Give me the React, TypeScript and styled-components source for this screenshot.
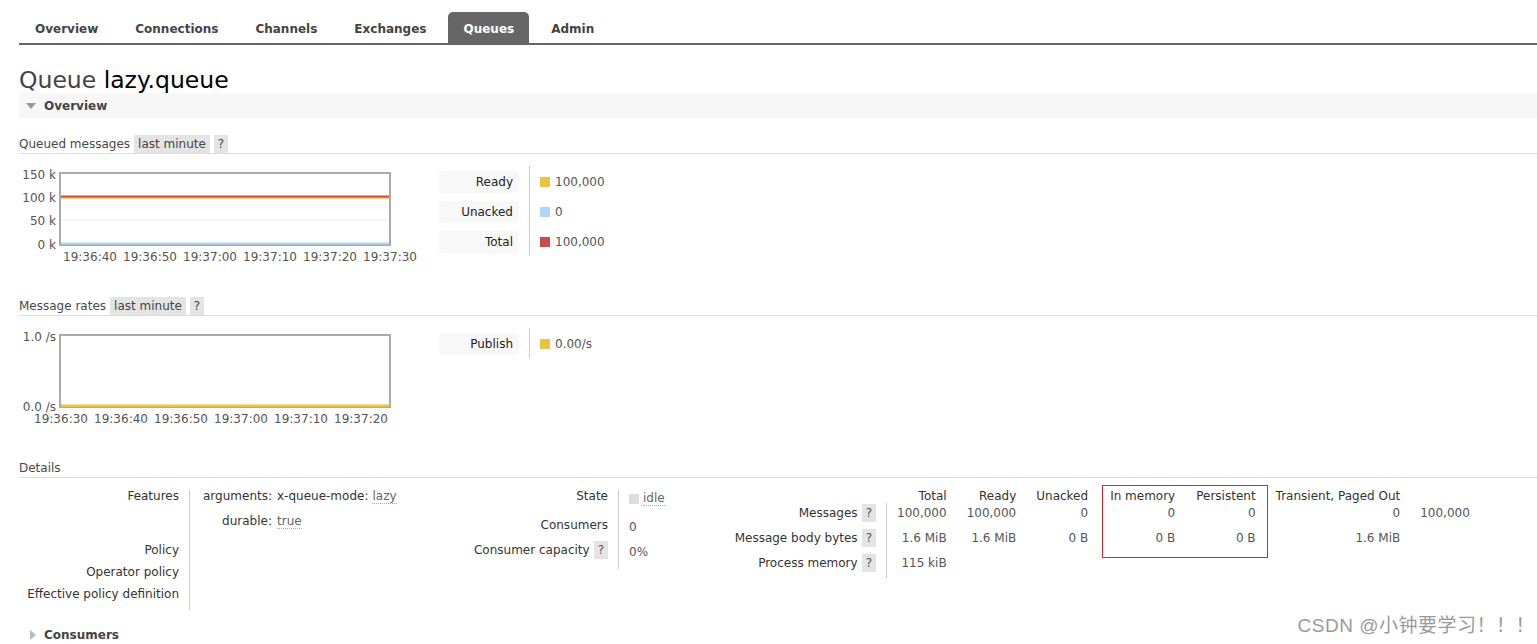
import React from "react";
import styled, { createGlobalStyle } from "styled-components";

const GlobalStyle = createGlobalStyle`
  html, body {
    margin: 0;
    padding: 0;
    background: #fff;
  }
  body {
    font: 12px "DejaVu Sans", Verdana, sans-serif;
    color: #484848;
  }
`;

const Page = styled.div`
  position: relative;
  box-sizing: border-box;
  height: 644px;
  overflow: hidden;
  padding: 12px 0 0 19px;
`;

const Tabs = styled.ul`
  display: flex;
  list-style: none;
  margin: 0;
  padding: 0 0 0 1px;
  height: 31px;
  border-bottom: 2px solid #666;
`;

const Tab = styled.li<{ $active?: boolean }>`
  padding: 3px 15px 0;
  margin-right: 7px;
  line-height: 28px;
  font-weight: bold;
  color: ${(p) => (p.$active ? "#fff" : "#444")};
  background: ${(p) => (p.$active ? "#666" : "transparent")};
  border-radius: 5px 5px 0 0;
`;

const Title = styled.h1`
  margin: 22px 0 0;
  font-size: 23.5px;
  line-height: 26px;
  font-weight: normal;
  color: #444;

  b {
    font-weight: normal;
    color: #000;
  }
`;

const SectionHeader = styled.div<{ $open?: boolean; $top?: number }>`
  display: flex;
  align-items: center;
  gap: 8px;
  height: 25px;
  margin-top: ${(p) => p.$top ?? 0}px;
  padding-left: ${(p) => (p.$open ? 7 : 11)}px;
  background: ${(p) => (p.$open ? "#f7f7f7" : "transparent")};
  font-weight: bold;
  color: #444;
`;

const Arrow = styled.span<{ $open?: boolean }>`
  width: 0;
  height: 0;
  ${(p) =>
    p.$open
      ? `border-left: 5px solid transparent;
         border-right: 5px solid transparent;
         border-top: 6px solid #999;`
      : `border-top: 5px solid transparent;
         border-bottom: 5px solid transparent;
         border-left: 6px solid #bbb;`}
`;

const SubHeading = styled.div<{ $top: number }>`
  display: flex;
  align-items: center;
  margin-top: ${(p) => p.$top}px;
  line-height: 18px;
  border-bottom: 1px solid #ddd;
`;

const Badge = styled.span`
  margin-left: 4px;
  padding: 0 4px;
  background: #e4e4e4;
  color: #444;
`;

const Help = styled.span`
  margin-left: 4px;
  padding: 2px 4px;
  background: #e4e4e4;
  color: #555;
`;

const ChartRow = styled.div<{ $top: number }>`
  display: flex;
  align-items: flex-start;
  margin-top: ${(p) => p.$top}px;
`;

const ChartSvg = styled.svg`
  display: block;
  flex: 0 0 420px;

  text {
    font-family: "DejaVu Sans", Verdana, sans-serif;
    font-size: 12px;
    fill: #545454;
  }
`;

const Legend = styled.div`
  margin-top: 2px;
`;

const LegendRow = styled.div`
  display: flex;
`;

const LegendKey = styled.div`
  width: 80px;
  padding: 5px 10px 3px 0;
  border-right: 1px solid #ccc;
`;

const KeyBox = styled.div`
  height: 22px;
  line-height: 22px;
  padding-right: 6px;
  text-align: right;
  background: #f8f8f8;
  border-radius: 3px;
  color: #222;
`;

const LegendValue = styled.div`
  display: flex;
  align-items: center;
  gap: 5px;
  padding: 2px 0 0 10px;
  color: #555;
`;

const Swatch = styled.span<{ $color: string }>`
  display: inline-block;
  width: 10px;
  height: 10px;
  background: ${(p) => p.$color};
`;

const DetailsRow = styled.div`
  display: flex;
  align-items: flex-start;
  margin-top: 7px;
`;

const Facts = styled.div<{ $width: number; $label: number; $rows: number }>`
  flex: 0 0 ${(p) => p.$width}px;
  display: grid;
  grid-template-columns: ${(p) => p.$label}px 1px auto;
  grid-template-rows: repeat(${(p) => p.$rows}, auto);
  column-gap: 10px;
  line-height: 14px;
`;

const Rule = styled.div<{ $rows: number }>`
  grid-column: 2;
  grid-row: 1 / span ${(p) => p.$rows};
  margin: 5px 0 -5px;
  background: #ccc;
`;

const FactLabel = styled.div<{ $pt?: number; $pb?: number }>`
  grid-column: 1;
  text-align: right;
  white-space: nowrap;
  color: #333;
  padding: ${(p) => p.$pt ?? 4}px 0 ${(p) => p.$pb ?? 4}px;
`;

const FactValue = styled.div<{ $pt?: number; $pb?: number }>`
  grid-column: 3;
  display: flex;
  align-items: center;
  gap: 4px;
  white-space: nowrap;
  color: #555;
  padding: ${(p) => p.$pt ?? 4}px 0 ${(p) => p.$pb ?? 4}px;
`;

const ArgsGrid = styled.div`
  grid-column: 3;
  display: grid;
  grid-template-columns: 72px auto;
  column-gap: 5px;
  row-gap: 10px;
  padding: 4px 0 10px;
  white-space: nowrap;
`;

const ArgKey = styled.span`
  text-align: right;
  color: #333;
`;

const ArgVal = styled.span`
  display: flex;
  gap: 4px;
  color: #333;
`;

const Dotted = styled.span`
  color: #666;
  border-bottom: 1px dotted #aaa;
`;

const StatsWrap = styled.div`
  position: relative;
`;

const StatsTable = styled.table`
  border-collapse: separate;
  border-spacing: 0;
  line-height: 14px;
`;

const HeadCell = styled.th<{ $pad: number }>`
  padding: 4px 0 0 ${(p) => p.$pad}px;
  font-weight: normal;
  text-align: right;
  white-space: nowrap;
  color: #333;
`;

const RowLabel = styled.th`
  width: 167px;
  padding: 3px 10px 8px 0;
  font-weight: normal;
  text-align: right;
  white-space: nowrap;
  color: #333;
`;

const Cell = styled.td<{ $first?: boolean; $pad: number }>`
  padding: 3px 0 8px ${(p) => p.$pad}px;
  text-align: right;
  white-space: nowrap;
  color: #555;
  border-left: ${(p) => (p.$first ? "1px solid #ccc" : "none")};
`;

const Highlight = styled.div`
  position: absolute;
  left: 393px;
  top: 0;
  width: 166px;
  height: 73px;
  box-sizing: border-box;
  border: 1px solid #e8202a;
  pointer-events: none;
`;

const Watermark = styled.div`
  position: absolute;
  right: 2px;
  bottom: 7px;
  font: 19px "Liberation Sans", "Noto Sans CJK SC", sans-serif;
  letter-spacing: 0.5px;
  color: #9a9a9a;
  text-shadow: 0 0 1px #fff;
`;

type Tick = { label: string; pos: number };
type Line = { y: number; color: string; width: number };

const Chart = ({
  yTicks,
  xTicks,
  grid,
  lines,
}: {
  yTicks: Tick[];
  xTicks: Tick[];
  grid: number[];
  lines: Line[];
}) => (
  <ChartSvg width={420} height={100} viewBox="0 0 420 100">
    {grid.map((y) => (
      <line key={y} x1={41} x2={371} y1={y} y2={y} stroke="#eee" strokeWidth={1} />
    ))}
    <rect x={41} y={9} width={330} height={72} fill="none" stroke="#aaa" strokeWidth={2} />
    {lines.map((l, i) => (
      <line key={i} x1={42} x2={370} y1={l.y} y2={l.y} stroke={l.color} strokeWidth={l.width} />
    ))}
    {yTicks.map((t) => (
      <text key={t.label} x={37} y={t.pos} textAnchor="end" dominantBaseline="central">
        {t.label}
      </text>
    ))}
    {xTicks.map((t) => (
      <text key={t.label} x={t.pos} y={93} textAnchor="middle" dominantBaseline="central">
        {t.label}
      </text>
    ))}
  </ChartSvg>
);

const queuedX = ["19:36:40", "19:36:50", "19:37:00", "19:37:10", "19:37:20", "19:37:30"].map(
  (label, i) => ({ label, pos: 71 + i * 60 })
);
const ratesX = ["19:36:30", "19:36:40", "19:36:50", "19:37:00", "19:37:10", "19:37:20"].map(
  (label, i) => ({ label, pos: 42 + i * 60 })
);

const queuedLegend = [
  { name: "Ready", color: "#edc240", value: "100,000" },
  { name: "Unacked", color: "#afd8f8", value: "0" },
  { name: "Total", color: "#cb4b4b", value: "100,000" },
];

const tabs = ["Overview", "Connections", "Channels", "Exchanges", "Queues", "Admin"];

// left padding of each value column, so right edges line up with the reference
const colPad = [10, 20, 20, 22, 21, 20, 20];

const statHeads = ["Total", "Ready", "Unacked", "In memory", "Persistent", "Transient, Paged Out", ""];

const statRows = [
  { label: "Messages", values: ["100,000", "100,000", "0", "0", "0", "0", "100,000"] },
  { label: "Message body bytes", values: ["1.6 MiB", "1.6 MiB", "0 B", "0 B", "0 B", "1.6 MiB", ""] },
  { label: "Process memory", values: ["115 kiB", "", "", "", "", "", ""] },
];

export default function App() {
  return (
    <Page>
      <GlobalStyle />
      <Tabs>
        {tabs.map((t) => (
          <Tab key={t} $active={t === "Queues"}>
            {t}
          </Tab>
        ))}
      </Tabs>

      <Title>
        Queue <b>lazy.queue</b>
      </Title>

      <SectionHeader $open>
        <Arrow $open />
        Overview
      </SectionHeader>

      <SubHeading $top={17}>
        Queued messages
        <Badge>last minute</Badge>
        <Badge>?</Badge>
      </SubHeading>
      <ChartRow $top={10}>
        <Chart
          yTicks={[
            { label: "150 k", pos: 11 },
            { label: "100 k", pos: 34 },
            { label: "50 k", pos: 57 },
            { label: "0 k", pos: 81 },
          ]}
          xTicks={queuedX}
          grid={[33, 56]}
          lines={[
            { y: 34, color: "#edc240", width: 1.5 },
            { y: 32.5, color: "#cb4b4b", width: 2 },
            { y: 79.5, color: "#afd8f8", width: 2 },
          ]}
        />
        <Legend>
          {queuedLegend.map((l) => (
            <LegendRow key={l.name}>
              <LegendKey>
                <KeyBox>{l.name}</KeyBox>
              </LegendKey>
              <LegendValue>
                <Swatch $color={l.color} />
                {l.value}
              </LegendValue>
            </LegendRow>
          ))}
        </Legend>
      </ChartRow>

      <SubHeading $top={33}>
        Message rates
        <Badge>last minute</Badge>
        <Badge>?</Badge>
      </SubHeading>
      <ChartRow $top={10}>
        <Chart
          yTicks={[
            { label: "1.0 /s", pos: 11 },
            { label: "0.0 /s", pos: 81 },
          ]}
          xTicks={ratesX}
          grid={[]}
          lines={[{ y: 79.8, color: "#edc240", width: 2.5 }]}
        />
        <Legend>
          <LegendRow>
            <LegendKey>
              <KeyBox>Publish</KeyBox>
            </LegendKey>
            <LegendValue>
              <Swatch $color="#edc240" />
              0.00/s
            </LegendValue>
          </LegendRow>
        </Legend>
      </ChartRow>

      <SubHeading $top={33}>Details</SubHeading>
      <DetailsRow>
        <Facts $width={420} $label={160} $rows={4}>
          <Rule $rows={4} />
          <FactLabel>Features</FactLabel>
          <ArgsGrid>
            <ArgKey>arguments:</ArgKey>
            <ArgVal>
              x-queue-mode: <Dotted>lazy</Dotted>
            </ArgVal>
            <ArgKey>durable:</ArgKey>
            <ArgVal>
              <Dotted>true</Dotted>
            </ArgVal>
          </ArgsGrid>
          <FactLabel>Policy</FactLabel>
          <FactValue />
          <FactLabel>Operator policy</FactLabel>
          <FactValue />
          <FactLabel>Effective policy definition</FactLabel>
          <FactValue />
        </Facts>

        <Facts $width={270} $label={169} $rows={3}>
          <Rule $rows={3} />
          <FactLabel $pb={10}>State</FactLabel>
          <FactValue $pt={6} $pb={8}>
            <Swatch $color="#ddd" />
            <Dotted>idle</Dotted>
          </FactValue>
          <FactLabel $pb={7}>Consumers</FactLabel>
          <FactValue $pt={6} $pb={5}>
            0
          </FactValue>
          <FactLabel $pb={7}>
            Consumer capacity<Help>?</Help>
          </FactLabel>
          <FactValue $pt={6} $pb={5}>
            0%
          </FactValue>
        </Facts>

        <StatsWrap>
          <StatsTable>
            <thead>
              <tr>
                <RowLabel as="td" />
                {statHeads.map((h, i) => (
                  <HeadCell key={i} $pad={colPad[i] + (i === 0 ? 1 : 0)}>
                    {h}
                  </HeadCell>
                ))}
              </tr>
            </thead>
            <tbody>
              {statRows.map((r) => (
                <tr key={r.label}>
                  <RowLabel>
                    {r.label}
                    <Help>?</Help>
                  </RowLabel>
                  {r.values.map((v, i) => (
                    <Cell key={i} $first={i === 0} $pad={colPad[i]}>
                      {v}
                    </Cell>
                  ))}
                </tr>
              ))}
            </tbody>
          </StatsTable>
          <Highlight />
        </StatsWrap>
      </DetailsRow>

      <SectionHeader $top={17}>
        <Arrow />
        Consumers
      </SectionHeader>

      <Watermark>CSDN @小钟要学习！！！</Watermark>
    </Page>
  );
}
